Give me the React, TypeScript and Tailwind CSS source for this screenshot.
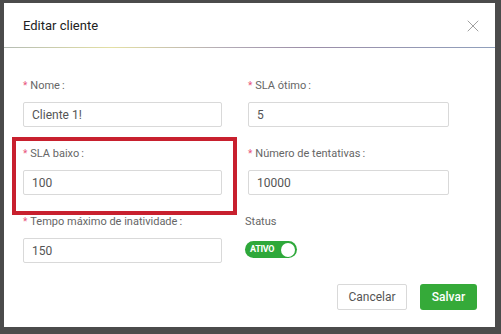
import { X } from "lucide-react"

interface FieldProps {
  label: string
  value: string
}

function Field({ label, value }: FieldProps) {
  return (
    <div className="flex flex-col gap-[8px]">
      <label className="h-[16px] leading-[16px] text-[11px] text-[#666] flex items-center">
        <span className="text-[#e8557a] text-[10px] mr-[3px] leading-none">*</span>
        <span>{label}</span>
        <span className="ml-[2px]">:</span>
      </label>
      <div className="h-[25px] border border-[#d9d9d9] rounded-[2px] px-[8px] flex items-center text-[12px] text-[#555]">
        {value}
      </div>
    </div>
  )
}

export default function App() {
  return (
    <div
      className="relative w-[501px] h-[334px] bg-[#4b4b4b] pt-[3px] pl-[4px] overflow-hidden"
      style={{ fontFamily: "Roboto, 'Liberation Sans', sans-serif" }}
    >
      <div className="w-[491px] h-[324px] bg-white flex flex-col">
        {/* Header */}
        <div className="h-[44px] flex items-center justify-between pl-[19px] pr-[12px]">
          <h2 className="text-[13px] text-[#222] pt-[2px]">Editar cliente</h2>
          <X className="w-[20px] h-[20px] text-[#a0a0a0] mt-[1px]" strokeWidth={1.2} />
        </div>
        <div className="h-px bg-[linear-gradient(to_right,#b4bcb4,#e4e0a4_22%,#b3abb6_45%,#9c8ea8_62%,#90a0bc)]"></div>

        {/* Body */}
        <div className="pt-[30px] pl-[19px] pr-[18px] flex flex-col">
          <div className="grid grid-cols-[199px_201px] gap-x-[26px] gap-y-[19px]">
            <Field label="Nome" value="Cliente 1!" />
            <Field label="SLA ótimo" value="5" />
            <Field label="SLA baixo" value="100" />
            <Field label="Número de tentativas" value="10000" />
            <Field label="Tempo máximo de inatividade" value="150" />
            <div className="flex flex-col -ml-[3px]">
              <span className="h-[16px] leading-[16px] text-[11px] text-[#666]">Status</span>
              <div className="mt-[11px] w-[52px] h-[17px] rounded-full bg-[#2ea83a] flex items-center justify-between pl-[5px] pr-[2px]">
                <span className="text-[9px] font-bold text-white tracking-[-0.3px]">ATIVO</span>
                <span className="w-[14px] h-[14px] rounded-full bg-white"></span>
              </div>
            </div>
          </div>

          {/* Footer buttons */}
          <div className="flex justify-end gap-[13px] mt-[21px]">
            <button className="w-[70px] h-[26px] border border-[#d9d9d9] rounded-[2px] text-[12px] text-[#555] bg-white">
              Cancelar
            </button>
            <button className="w-[57px] h-[26px] rounded-[3px] text-[12px] font-medium text-white bg-[#35aa39]">
              Salvar
            </button>
          </div>
        </div>
      </div>

      {/* Annotation box */}
      <div className="absolute left-[12px] top-[137px] w-[225px] h-[78px] border-4 border-[#c8202e]"></div>
    </div>
  )
}
